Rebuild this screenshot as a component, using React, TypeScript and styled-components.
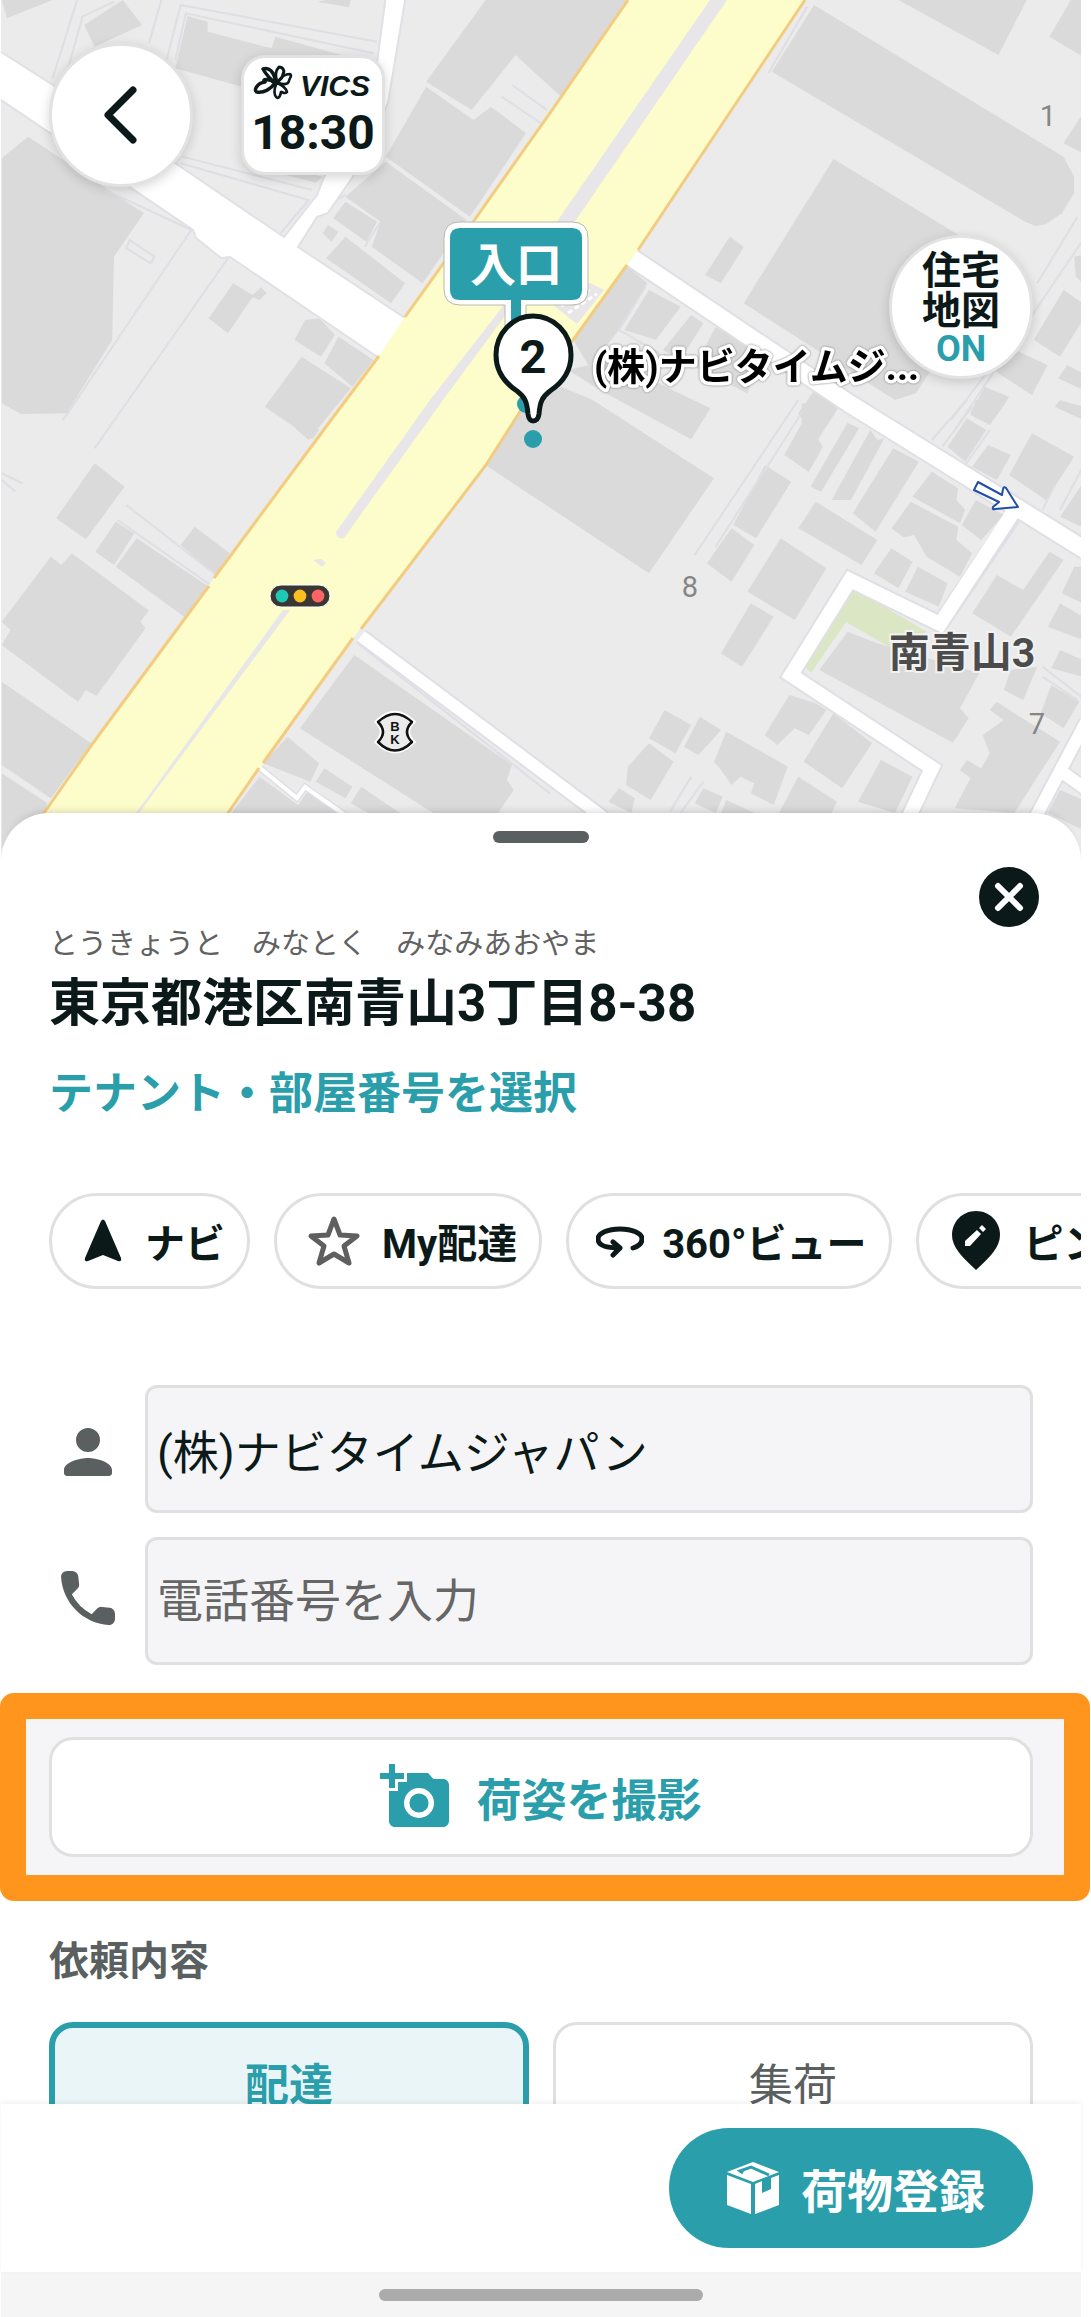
import React from "react";
import styled, { createGlobalStyle, css } from "styled-components";

const color = {
  ink: "#0b1a19",
  teal: "#2a9fab",
  tealSoft: "#eaf5f8",
  gray: "#5a5f5f",
  line: "#e0e0e0",
  surface: "#f5f5f8",
  orange: "#ff951c",
};

const font = `Roboto, "Noto Sans CJK JP", sans-serif`;

const GlobalStyle = createGlobalStyle`
  * { box-sizing: border-box; }
  body { margin: 0; background: #fff; color: ${color.ink}; font-family: ${font}; }
  button, input { font-family: inherit; color: inherit; margin: 0; }
  button { padding: 0; border: 0; background: none; cursor: pointer; }
  svg { display: block; flex: none; }
  h1, h2, p { margin: 0; }
`;

const Phone = styled.div`
  height: 100vh;
  margin: 0 10px 0 1px;
  display: flex;
  flex-direction: column;
`;

const Scroller = styled.main`
  flex: 1;
  min-height: 0;
  overflow: hidden;
  margin: 0 -10px 0 -1px;
  padding: 0 10px 0 1px;
`;

const MapArea = styled.section`
  position: relative;
  height: 861px;
  overflow: hidden;
  background: #ebebeb;
`;

const MapDrawing = styled.svg`
  width: 100%;
  height: 100%;
`;

const PlaceName = styled.text`
  font: 700 38px ${font};
  fill: #000;
  stroke: #fff;
  stroke-width: 7px;
  stroke-linejoin: round;
  paint-order: stroke;
  filter: drop-shadow(0 0 1px #777);
`;

const MapControls = styled.div`
  position: absolute;
  inset: 43px 48px auto;
  display: flex;
  flex-direction: column;
  gap: 48px;
`;

const ControlRow = styled.div`
  display: flex;
  align-items: center;
  gap: 48px;
`;

const floating = css`
  width: 144px;
  border: 3px solid #e2e2e2;
  background: #fff;
  box-shadow: 0 3px 12px rgba(0, 0, 0, 0.16);
  display: flex;
  flex-direction: column;
  align-items: center;
  justify-content: center;
`;

const RoundButton = styled.button`
  ${floating}
  height: 144px;
  border-radius: 50%;
  font-size: 39px;
  line-height: 40px;
  font-weight: 700;
`;

const EndButton = styled(RoundButton)`
  align-self: flex-end;
  padding-top: 4px;
`;

const OnText = styled.span`
  color: ${color.teal};
  font-size: 36px;
  line-height: 36px;
`;

const VicsBox = styled.div`
  ${floating}
  height: 120px;
  border-radius: 24px;
  font-size: 48px;
  line-height: 64px;
  font-weight: 700;
`;

const Sheet = styled.section`
  position: relative;
  margin-top: -48px;
  padding-top: 18px;
  border-radius: 48px 48px 0 0;
  background: #fff;
  box-shadow: 0 -8px 10px -8px rgba(0, 0, 0, 0.2);
`;

const Handle = styled.div`
  width: 96px;
  height: 12px;
  margin: 0 auto;
  border-radius: 6px;
  background: ${color.gray};
`;

const Header = styled.header`
  display: flex;
  justify-content: space-between;
  align-items: flex-start;
  padding: 24px 42px 0 48px;
`;

const Address = styled.div`
  padding-top: 57px;
`;

const Kana = styled.p`
  font-size: 29px;
  line-height: 40px;
  color: #616161;
`;

const Title = styled.h1`
  font-size: 51px;
  line-height: 80px;
  font-weight: 700;
`;

const TenantLink = styled.a`
  display: block;
  margin-top: 20px;
  font-size: 44px;
  line-height: 60px;
  font-weight: 700;
  color: ${color.teal};
  text-decoration: none;
`;

const CloseButton = styled.button`
  width: 60px;
  height: 60px;
  border-radius: 50%;
  background: ${color.ink};
  display: grid;
  place-items: center;
`;

const Chips = styled.nav`
  display: flex;
  gap: 24px;
  margin-top: 69px;
  padding-left: 48px;
  overflow: hidden;
`;

const Chip = styled.button`
  flex: none;
  height: 96px;
  padding: 0 22px 0 27px;
  border: 3px solid ${color.line};
  border-radius: 48px;
  display: flex;
  align-items: center;
  gap: 18px;
  font-size: 40px;
  font-weight: 700;
  white-space: nowrap;
`;

const Fields = styled.div`
  display: flex;
  flex-direction: column;
  gap: 24px;
  margin: 96px 48px 0;
`;

const Field = styled.div`
  display: flex;
  align-items: center;
`;

const FieldLabel = styled.label`
  width: 96px;
  padding-right: 18px;
  display: flex;
  justify-content: center;
`;

const FieldInput = styled.input`
  flex: 1;
  min-width: 0;
  height: 128px;
  padding: 0 9px;
  border: 3px solid ${color.line};
  border-radius: 12px;
  background: ${color.surface};
  font-size: 46px;
  &::placeholder { color: #666; opacity: 1; }
`;

const PhotoSection = styled.section`
  position: relative;
  margin-top: 48px;
  padding: 24px 48px;
  background: ${color.surface};
  &::after {
    content: "";
    position: absolute;
    inset: -20px -9px -20px -1px;
    border: 26px solid ${color.orange};
    border-radius: 14px;
    pointer-events: none;
  }
`;

const PhotoButton = styled.button`
  width: 100%;
  height: 120px;
  border: 3px solid ${color.line};
  border-radius: 24px;
  background: #fff;
  display: flex;
  align-items: center;
  justify-content: center;
  gap: 24px;
  font-size: 45px;
  font-weight: 700;
  color: ${color.teal};
`;

const SectionTitle = styled.h2`
  margin: 51px 48px 0;
  font-size: 40px;
  line-height: 60px;
  font-weight: 700;
  color: ${color.gray};
`;

const Tabs = styled.div`
  display: grid;
  grid-template-columns: 1fr 1fr;
  gap: 24px;
  margin: 30px 48px 0;
`;

const Tab = styled.button<{ $active?: boolean }>`
  height: 120px;
  border-radius: 24px;
  border: ${(p) => (p.$active ? `6px solid ${color.teal}` : `3px solid ${color.line}`)};
  background: ${(p) => (p.$active ? color.tealSoft : "#fff")};
  color: ${(p) => (p.$active ? color.teal : color.gray)};
  font-size: 44px;
  font-weight: ${(p) => (p.$active ? 700 : 400)};
`;

const Footer = styled.footer`
  position: relative;
  display: flex;
  justify-content: flex-end;
  padding: 24px 48px;
  background: #fff;
  box-shadow: 0 -2px 6px rgba(0, 0, 0, 0.06);
`;

const RegisterButton = styled.button`
  height: 120px;
  padding: 0 48px;
  border-radius: 60px;
  background: ${color.teal};
  color: #fff;
  display: flex;
  align-items: center;
  gap: 12px;
  font-size: 46px;
  font-weight: 700;
`;

const HomeBar = styled.div`
  height: 45px;
  padding-top: 17px;
  background: #f5f5f5;
`;

const HomePill = styled.div`
  width: 30%;
  height: 12px;
  margin: 0 auto;
  border-radius: 6px;
  background: #ababab;
`;

/* Building footprints, one list per map tile. */
const tileNW = [
  "5,0 150,0 20,55",
  "240,75 350,0 405,75 270,140",
  "535,48 592,65 592,95 775,145 785,110 1060,190 1060,290 690,260 500,205",
  "5,475 80,410 410,640 325,770 320,1020 190,1240 60,1242 5,1210",
  "760,490 920,530 900,548 780,515",
  "930,0 1000,0 995,22 905,5",
  "1385,0 1790,0 1600,290 1470,165 1345,330 1215,245",
  "1215,260 1350,360 1400,320 1500,400 1340,650 1100,470",
  "1100,485 1330,660 1205,850 1060,740 1085,665 985,590",
  "985,605 1075,665 1045,725 950,655",
  "985,710 1155,850 1115,910 930,775",
  "935,675 965,695 945,725 920,700",
  "665,850 720,885 745,862 760,880 740,900 720,892 650,1000 595,955",
  "870,960 910,955 955,1005 915,1070 840,1020",
  "965,1010 1065,1080 1005,1160 925,1090",
  "860,1070 1000,1165 880,1320 835,1278 755,1220",
];

const tileNE = [
  "780,15 1490,470 1520,530 1520,580 1485,640 1440,672 1410,678 1380,665 660,215",
  "835,477 1215,720 1180,1000 1070,1180 1010,1200 580,910",
  "1020,0 1385,0 1305,165",
  "1510,0 1545,0 1545,170 1450,110",
  "1545,340 1490,430 1545,460",
  "540,710 580,740 515,850 470,825",
  "245,795 305,850 225,990 140,1100 95,1020",
  "310,870 400,920 330,1020 240,990",
  "430,945 465,970 400,1080 350,1050",
  "500,980 640,1060 590,1180 440,1100",
  "1330,1040 1445,1095 1400,1185 1290,1110",
  "1490,870 1545,910 1545,960 1480,1070 1405,1020",
  "1520,770 1545,765 1545,850 1525,830",
  "1500,1095 1545,1120 1545,1170 1475,1135",
  "200,1080 485,1225 430,1318 170,1170 80,1110",
  "785,1165 860,1205 790,1320 735,1240",
  "1265,1160 1335,1190 1290,1260 1225,1240",
];

const tileSW = [
  "270,190 355,260 245,418 160,355",
  "330,365 383,400 325,495 272,455",
  "390,415 595,560 525,650 330,500",
  "555,380 655,460 615,525 515,435",
  "145,470 175,495 205,460 425,632 400,665 415,685 275,888 245,870 222,905 5,735 30,690 5,665",
  "5,845 260,1030 145,1195 5,1095",
  "5,1120 135,1210 125,1239 5,1345",
  "865,55 910,90 890,118 845,85",
  "1010,765 1460,1095 1445,1140 1465,1170 1420,1239 1235,1239 855,985",
  "820,1010 910,1090 885,1145 750,1090",
  "925,1105 1005,1160 985,1195 900,1145",
  "740,1130 850,1215 880,1170 980,1239 660,1239",
  "1030,1160 1140,1239 1050,1239 1000,1210",
];

const tileSE = [
  "-60,40 60,-40 150,0 495,235 310,520 -155,195",
  "745,10 850,20 790,115 805,140 765,215 695,165 745,70",
  "875,68 908,85 800,275 770,260",
  "940,90 960,120 980,115 885,300 830,300",
  "1005,145 1078,185 955,395 890,340",
  "640,195 715,245 615,415 550,375",
  "545,385 610,435 545,545 475,490",
  "785,305 960,420 915,495 735,385",
  "685,415 815,505 725,660 590,575",
  "600,610 665,650 575,800 515,760",
  "1115,215 1190,265 1185,300 1210,330 1195,370 1060,290",
  "1055,305 1190,380 1185,420 1230,460 1195,530 1100,470 1065,405 1035,412 1000,385",
  "1240,300 1320,345 1255,420 1200,375",
  "1000,445 1060,485 1020,565 950,520",
  "1075,500 1160,550 1135,620 1040,575",
  "875,695 960,730 1250,820 1195,925 1220,955 1175,1028 795,810",
  "1300,525 1375,570 1450,455 1490,480 1340,710 1230,640",
  "1400,100 1520,170 1440,300 1335,225",
  "1215,55 1270,90 1210,185 1160,140",
  "1275,135 1340,165 1300,240 1230,200",
  "1240,0 1330,0 1280,75 1225,45",
  "1480,0 1545,20 1545,60 1465,20",
  "1545,250 1540,380 1480,350",
  "1520,500 1545,500 1545,610 1485,580",
  "1480,610 1545,650 1545,720 1445,680",
  "1480,750 1545,780 1545,830 1455,805",
  "1340,810 1415,800 1375,900 1320,870",
  "1455,855 1535,905 1490,985 1425,940",
  "1300,905 1350,940 1480,1025 1350,1239 1180,1225 1225,1135 1195,1110 1215,1080 1255,1105 1280,1060 1260,1005 1320,960 1280,930",
  "1480,1170 1545,1200 1545,1290 1445,1239",
  "710,885 785,910 815,930 765,1005 725,985 675,1035 640,1005",
  "835,940 945,1030 860,1165 750,1085",
  "970,1080 1060,1130 1010,1239 905,1205",
  "530,995 705,1100 665,1215 600,1180 610,1150 570,1130 545,1155 515,1110 495,1085",
  "735,1130 845,1205 830,1239 680,1239",
  "355,930 430,975 385,1060 310,1015",
  "455,950 515,990 490,1020 450,1065 410,1040",
  "310,1030 380,1085 315,1200 245,1155 250,1100",
  "465,1165 520,1190 500,1239 440,1210",
  "225,1165 270,1195 260,1239 195,1205",
  "530,1200 610,1239 515,1239",
];

const tiles = [
  {
    at: "scale(.3507 .3333)",
    shapes: tileNW,
    lines:
      "M220,0 150,235M325,5 235,50 185,240M460,0 425,130M475,180 515,15 1075,125M500,180 530,40 1065,160M520,470 890,570M515,490 880,600 800,700M300,570 545,690 180,1260M650,775 270,1345M960,600 985,585M1085,665 1040,740M370,720 440,770 430,790 360,745zM1460,255 1560,330M1430,290 1550,375",
  },
  {
    at: "translate(540) scale(.3514 .3333)",
    shapes: tileNE,
    lines: "M1530,650 1415,850M1340,1020 1170,1260M1545,720 1180,1290M760,20 650,220M300,860 225,990 340,1060",
  },
  {
    at: "translate(0 400) scale(.3507 .3333)",
    shapes: tileSW,
    lines: "M360,315 610,520M335,360 600,555M5,220 65,250M5,240 45,275M1020,730 1568,1180",
  },
  {
    at: "translate(540 400) scale(.3514 .3333)",
    shapes: tileSE,
    lines:
      "M735,0 440,465M750,30 500,440M1215,0 1115,120M1230,20 1145,140M1280,90 1210,195M1465,255 1430,330M1545,200 1480,330M1430,800 1540,890M1430,830 1530,900M430,1130 370,1235M465,1145 400,1239",
  },
];

function CityMap() {
  return (
    <MapDrawing viewBox="1 0 1080 861" preserveAspectRatio="xMidYMin slice" role="img" aria-label="地図">
      <rect width="1091" height="861" fill="#ebebeb" />
      {tiles.map((tile) => (
        <g key={tile.at} transform={tile.at}>
          <g fill="#dadada">
            {tile.shapes.map((points) => (
              <polygon key={points} points={points} />
            ))}
          </g>
          <path d={tile.lines} fill="none" stroke="#dedee4" strokeWidth="6" />
        </g>
      ))}
      <path d="M853 588 927 632 891 648 846 622 811 673 801 662z" fill="#dbe7c4" />

      {/* side streets */}
      <g stroke="#e0e0e6" strokeWidth="2" fill="#fff">
        <path d="M-5 48 175 163 284 237 317 195 324 177 360 120 377 63 386-5H406L388 103 354 175 328 213 317 217 298 247 408 320 379 358 230 257 221 258 196 238 193 230-5 96z" />
      </g>
      <g fill="none" strokeLinejoin="miter">
        <g stroke="#dfdfe6">
          <path d="M632 258 850 404 1090 553" strokeWidth="21" />
          <path d="M1016 512 940 624 850 580 791 675 932 768 905 825" strokeWidth="18" />
          <path d="M361 636 604 818M1086 722 1034 820M1062 772 1090 792" strokeWidth="16" />
          <path d="M260 768 297 798 305 787 345 815" strokeWidth="7" />
        </g>
        <g stroke="#fff">
          <path d="M632 258 850 404 1090 553" strokeWidth="17" />
          <path d="M1016 508 940 624 850 580 791 675 932 768 905 825" strokeWidth="14" />
          <path d="M361 636 604 818M1086 722 1034 820M1062 772 1090 792" strokeWidth="12" />
          <path d="M260 768 297 798 305 787 345 815" strokeWidth="4" />
        </g>
      </g>

      {/* main avenue */}
      <path
        d="M628 0 550 113 473 222 405 317 379 356 331 420 214 578 186 617 93 743 44 813 20 850H203L228 813 359 630 486 465 521 410 573 340 638 250 805 0z"
        fill="#fdfdcb"
      />
      <path
        d="M628 0 550 113 473 222 405 317M379 356 331 420 214 578M209 586 186 617 93 743 44 813 20 850M203 850 228 813 259 768M263 763 353 638M361 629 486 465 521 410 573 340 627 265M638 250 805 0"
        fill="none"
        stroke="#f3cc80"
        strokeWidth="3"
      />
      <g fill="#e8e6e8">
        <path d="M710 0H727L576 220 443 400 344 538Q337 540 336 532L430 400 500 310 558 220z" />
        <path d="M313 560 321 559 326 563 322 567z" />
        <path d="M283 610H290L139 813 110 850 136 813z" />
        <path d="M553 305 590 283 604 290 577 324z" />
      </g>
      <path d="M561 306 590 290M568 313 597 294" stroke="#fff" strokeWidth="3" strokeDasharray="5 3" />

      {/* one-way arrow */}
      <path
        d="M978 482 974 490 999 502 993 507Q992 510 995 509L1018 507 1006 488Q1004 486 1003 489L1002 495z"
        fill="#fff"
        stroke="#1f4fa8"
        strokeWidth="2"
        strokeLinejoin="round"
      />

      {/* traffic light */}
      <rect x="270" y="585" width="60" height="22" rx="11" fill="#3a3634" stroke="#fff" strokeWidth="1" />
      <circle cx="282" cy="596" r="6.4" fill="#1fc7b6" />
      <circle cx="300" cy="596" r="6.4" fill="#fbc01f" />
      <circle cx="318" cy="596" r="6.4" fill="#ff6464" />

      {/* bank mark */}
      <path
        d="M378 722Q395 706 412 722 402 732 412 742 395 759 378 742 388 732 378 722z"
        fill="#ebebeb"
        stroke="#fff"
        strokeWidth="6"
      />
      <path
        d="M378 722Q395 706 412 722 402 732 412 742 395 759 378 742 388 732 378 722z"
        fill="#ebebeb"
        stroke="#111"
        strokeWidth="2.5"
        strokeLinejoin="round"
      />
      <g fontFamily="Liberation Sans, sans-serif" fontSize="13" fontWeight="700" textAnchor="middle" fill="#111">
        <text x="395" y="731">B</text>
        <text x="395" y="744">K</text>
      </g>

      <g fontFamily={font} textAnchor="middle">
        <g fill="#858585" fontSize="29">
          <text x="1048" y="126">1</text>
          <text x="690" y="597">8</text>
          <text x="1037" y="734">7</text>
        </g>
        <text
          x="962" y="667" fontSize="41" fontWeight="700" fill="#4c4c4c"
          stroke="#f2f2f2" strokeWidth="4" paintOrder="stroke"
        >
          南青山3
        </text>

        {/* entrance marker */}
        <path
          d="M460 222H572Q588 222 588 238V289Q588 305 572 305H526V345H505V305H460Q444 305 444 289V238Q444 222 460 222z"
          fill="#fff"
          stroke="#b9b9b0"
          strokeWidth="1"
        />
        <path
          d="M460 228H572Q582 228 582 238V290Q582 300 572 300H521V345H511V300H460Q450 300 450 290V238Q450 228 460 228z"
          fill={color.teal}
        />
        <circle cx="526" cy="404" r="9" fill={color.teal} />
        <circle cx="533" cy="439" r="9" fill={color.teal} />
        <text x="516" y="281" fontSize="46" fontWeight="700" fill="#fff">入口</text>

        {/* numbered pin */}
        <path
          d="M533 316C554 316 571 333 571 355 571 371 562 383 550 391 542 397 540 402 539 414Q538 421 533 421 529 421 528 414C527 402 525 397 517 391 505 383 496 371 496 355 496 333 513 316 533 316z"
          fill="#fff"
          stroke={color.ink}
          strokeWidth="5"
        />
        <text x="533" y="373" fontSize="47" fontWeight="700" fill={color.ink}>2</text>
      </g>

      <PlaceName x="594" y="380">(株)ナビタイムジ...</PlaceName>
    </MapDrawing>
  );
}

const VicsLogo = () => (
  <svg width="120" height="36" viewBox="0 0 120 36" role="img" aria-label="VICS">
    <g fill="none" stroke={color.ink} strokeLinejoin="round">
      <path d="M23 18C18 15 14 11 10 4 16 2 21 6 23 18z" strokeWidth="3.5" />
      <path d="M22 18C16 13 8 14 12 17 4 18 0 26 4 27 11 28 18 24 22 18z" strokeWidth="3.5" />
      <path d="M24 17C22 11 22 6 26 2 30 2 32 6 30 9 30 12 27 15 24 17z" strokeWidth="3" />
      <path d="M25 17C28 12 32 9 37 9 40 11 36 13 36 16 35 20 29 20 25 17z" strokeWidth="2.6" />
      <path d="M24 18C29 20 33 23 34 27 31 30 29 26 28 27 27 33 24 35 22 30 21 26 22 21 24 18z" strokeWidth="2.6" />
    </g>
    <text
      x="47" y="31" fontFamily="Liberation Sans, sans-serif"
      fontSize="30" fontWeight="700" fontStyle="italic" fill={color.ink}
    >
      VICS
    </text>
  </svg>
);

const NavIcon = () => (
  <svg width="48" height="48" viewBox="0 0 48 48" fill={color.ink}>
    <path d="M22 4Q24 1 26 4L42 41Q43 45 39 44L24 38 9 44Q5 45 6 41z" />
  </svg>
);

const StarIcon = () => (
  <svg width="60" height="60" viewBox="0 0 60 60">
    <path
      d="M30 8 36 24 53 25 40 35 45 52 30 43 15 52 20 35 7 25 24 24z"
      fill="none" stroke="#5f5f5f" strokeWidth="5" strokeLinejoin="round"
    />
  </svg>
);

const RotateIcon = () => (
  <svg
    width="48" height="48" viewBox="0 0 48 48"
    fill="none" stroke={color.ink} strokeWidth="5" strokeLinecap="round" strokeLinejoin="round"
  >
    <path d="M37 31C43 29 46 26 46 22 46 16 36 12 24 12S2 16 2 22 10 31 23 31M17 25 24 31 17 38" />
  </svg>
);

const PinEditIcon = () => (
  <svg width="60" height="60" viewBox="0 0 60 60">
    <path d="M30 0C44 0 54 11 54 24 54 36 44 46 30 59 16 46 6 36 6 24 6 11 16 0 30 0z" fill={color.ink} />
    <path d="M19 30 31 19 35 23 24 35H19zM33 17 36 14 40 18 37 21z" fill="#fff" />
  </svg>
);

const PersonIcon = () => (
  <svg width="72" height="72" viewBox="0 -1 24 24" fill={color.gray}>
    <path d="M12 12a4 4 0 1 0 0-8 4 4 0 0 0 0 8zM12 14c-2.67 0-8 1.34-8 4v1c0 .55.45 1 1 1h14c.55 0 1-.45 1-1v-1c0-2.66-5.33-4-8-4z" />
  </svg>
);

const PhoneIcon = () => (
  <svg width="72" height="72" viewBox="0 1 24 24" fill={color.gray}>
    <path d="M19.23 15.26l-2.54-.29a2 2 0 0 0-1.64.57l-1.84 1.84a15.05 15.05 0 0 1-6.59-6.59l1.85-1.85c.43-.43.64-1.03.57-1.64l-.29-2.52A2 2 0 0 0 6.76 3H5.03C3.9 3 2.96 3.94 3.03 5.07c.53 8.54 7.36 15.36 15.89 15.89 1.13.07 2.07-.87 2.07-2v-1.73a1.98 1.98 0 0 0-1.76-1.97z" />
  </svg>
);

const CameraIcon = () => (
  <svg width="72" height="72" viewBox="0 0 24 24" fill={color.teal}>
    <path d="M3 4V1h2v3h3v2H5v3H3V6H0V4h3zm3 6V7h3V4h7l1.83 2H21c1.1 0 2 .9 2 2v12c0 1.1-.9 2-2 2H5c-1.100 0-2-.9-2-2V10h3zm7 9a5 5 0 1 0 0-10 5 5 0 0 0 0 10zm-3.200-5a3.200 3.200 0 1 0 6.400 0 3.200 3.200 0 0 0-6.400 0z" />
  </svg>
);

const BoxIcon = () => (
  <svg width="72" height="72" viewBox="-9 -10 72 72" fill="#fff">
    <path d="M27 0 53 10 27 20 1 10z" />
    <path d="M1 13 25 22V52L1 43zM29 22 36 19V31L45 27V16L53 13V43L29 52z" />
    <path d="M17 11 14 9 25 5 43 13" fill="none" stroke={color.teal} strokeWidth="3" />
  </svg>
);

export default function App() {
  return (
    <>
      <GlobalStyle />
      <Phone>
        <Scroller>
          <MapArea>
            <CityMap />
            <MapControls>
              <ControlRow>
                <RoundButton aria-label="戻る">
                  <svg width="60" height="60" viewBox="0 0 60 60">
                    <path
                      d="M42 5 17 30 42 55" fill="none" stroke={color.ink}
                      strokeWidth="7" strokeLinecap="round" strokeLinejoin="round"
                    />
                  </svg>
                </RoundButton>
                <VicsBox>
                  <VicsLogo />
                  <span>18:30</span>
                </VicsBox>
              </ControlRow>
              <EndButton>
                <span>住宅</span>
                <span>地図</span>
                <OnText>ON</OnText>
              </EndButton>
            </MapControls>
          </MapArea>

          <Sheet>
            <Handle />
            <Header>
              <Address>
                <Kana>とうきょうと　みなとく　みなみあおやま</Kana>
                <Title>東京都港区南青山3丁目8-38</Title>
                <TenantLink href="#tenant">テナント・部屋番号を選択</TenantLink>
              </Address>
              <CloseButton aria-label="閉じる">
                <svg width="30" height="30" viewBox="0 0 30 30">
                  <path d="M4 4 26 26M26 4 4 26" stroke="#fff" strokeWidth="6" strokeLinecap="round" />
                </svg>
              </CloseButton>
            </Header>

            <Chips>
              <Chip><NavIcon />ナビ</Chip>
              <Chip><StarIcon />My配達</Chip>
              <Chip><RotateIcon />360°ビュー</Chip>
              <Chip><PinEditIcon />ピン</Chip>
            </Chips>

            <Fields>
              <Field>
                <FieldLabel htmlFor="name" aria-label="名前"><PersonIcon /></FieldLabel>
                <FieldInput id="name" defaultValue="(株)ナビタイムジャパン" />
              </Field>
              <Field>
                <FieldLabel htmlFor="tel" aria-label="電話番号"><PhoneIcon /></FieldLabel>
                <FieldInput id="tel" type="tel" placeholder="電話番号を入力" />
              </Field>
            </Fields>

            <PhotoSection>
              <PhotoButton><CameraIcon />荷姿を撮影</PhotoButton>
            </PhotoSection>

            <SectionTitle>依頼内容</SectionTitle>
            <Tabs>
              <Tab $active aria-pressed="true">配達</Tab>
              <Tab aria-pressed="false">集荷</Tab>
            </Tabs>
          </Sheet>
        </Scroller>

        <Footer>
          <RegisterButton><BoxIcon />荷物登録</RegisterButton>
        </Footer>
        <HomeBar>
          <HomePill />
        </HomeBar>
      </Phone>
    </>
  );
}
